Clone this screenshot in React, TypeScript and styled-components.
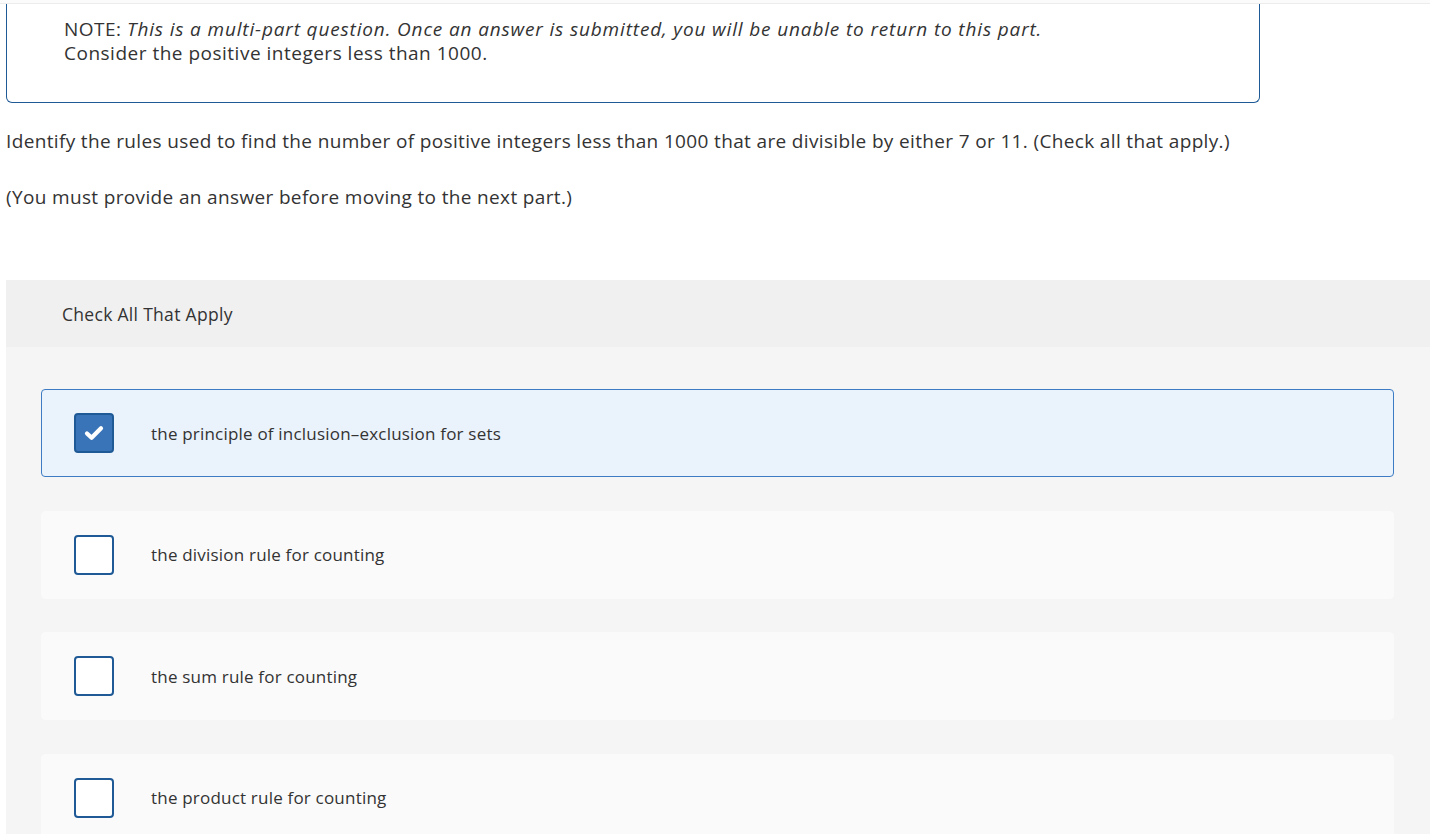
import styled, { createGlobalStyle } from "styled-components";

const GlobalStyle = createGlobalStyle`
  body {
    margin: 0;
    background: #ffffff;
    font-family: "Open Sans", "Liberation Sans", Arial, sans-serif;
    color: #333333;
  }
`;

const options = [
  { text: "the principle of inclusion\u2013exclusion for sets", checked: true },
  { text: "the division rule for counting", checked: false },
  { text: "the sum rule for counting", checked: false },
  { text: "the product rule for counting", checked: false },
];

const App = () => {
  return (
    <Page>
      <GlobalStyle />
      <TopRule />
      <NoteBox>
        <NoteLine>
          NOTE: <em>This is a multi-part question. Once an answer is submitted, you will be unable to return to this part.</em>
        </NoteLine>
        <NoteLine>Consider the positive integers less than 1000.</NoteLine>
      </NoteBox>
      <Prompt>
        Identify the rules used to find the number of positive integers less than 1000 that are divisible by either 7 or 11. (Check all that apply.)
      </Prompt>
      <Prompt $gap={32}>(You must provide an answer before moving to the next part.)</Prompt>
      <Panel>
        <PanelHeader>Check All That Apply</PanelHeader>
        <OptionList>
          {options.map((o) => (
            <Option key={o.text} $checked={o.checked}>
              <Box $checked={o.checked}>
                {o.checked && (
                  <svg width="22" height="18" viewBox="0 0 22 18">
                    <path
                      d="M4 9.5 L8.6 13.8 L18 4.2"
                      fill="none"
                      stroke="#fff"
                      strokeWidth="4.2"
                      strokeLinecap="round"
                      strokeLinejoin="round"
                    />
                  </svg>
                )}
              </Box>
              <OptionText>{o.text}</OptionText>
            </Option>
          ))}
        </OptionList>
      </Panel>
    </Page>
  );
};

const Page = styled.div`
  width: 1430px;
  height: 834px;
  overflow: hidden;
`;

const TopRule = styled.div`
  height: 3px;
  border-bottom: 1px solid #ececec;
  background: #fbfbfb;
`;

const NoteBox = styled.div`
  margin-left: 6px;
  width: 1195px;
  padding: 13px 0 37px 57px;
  border: 1px solid #1f5a96;
  border-top: none;
  border-radius: 0 0 6px 6px;
`;

const NoteLine = styled.div`
  font-size: 19px;
  line-height: 24px;
  letter-spacing: 0.5px;
  em {
    font-style: italic;
    letter-spacing: 0.85px;
  }
`;

const Prompt = styled.div<{ $gap?: number }>`
  margin: ${(p) => p.$gap ?? 26}px 0 0 6px;
  font-size: 19px;
  line-height: 24px;
  letter-spacing: 0.35px;
`;

const Panel = styled.div`
  margin: 71px 0 0 6px;
  background: #f5f5f5;
`;

const PanelHeader = styled.div`
  height: 67px;
  display: flex;
  align-items: center;
  padding-left: 56px;
  background: #f0f0f0;
  font-size: 17.5px;
  letter-spacing: 0.3px;
`;

const OptionList = styled.div`
  display: flex;
  flex-direction: column;
  gap: 33.67px;
  padding: 42px 36px 40px 35px;
`;

const Option = styled.div<{ $checked: boolean }>`
  height: 88px;
  box-sizing: border-box;
  display: flex;
  align-items: center;
  padding-left: 32px;
  border-radius: 4px;
  border: 1px solid ${(p) => (p.$checked ? "#3d7cc4" : "#fafafa")};
  background: ${(p) => (p.$checked ? "#eaf2fb" : "#fafafa")};
`;

const Box = styled.div<{ $checked: boolean }>`
  width: 40px;
  height: 40px;
  box-sizing: border-box;
  flex-shrink: 0;
  display: flex;
  align-items: center;
  justify-content: center;
  border: 2px solid #1f5a96;
  border-radius: 4px;
  background: ${(p) => (p.$checked ? "#3a74b8" : "#ffffff")};
`;

const OptionText = styled.span`
  margin-left: 37px;
  font-size: 17px;
  letter-spacing: 0.2px;
`;

export default App;
